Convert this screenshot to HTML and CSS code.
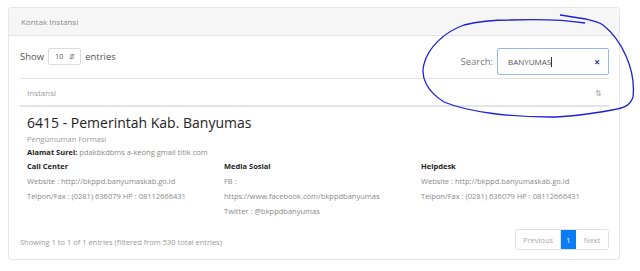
FILE: index.html
```html
<!DOCTYPE html>
<html lang="en">
<head>
  <meta charset="UTF-8">
  <title>Kontak Instansi</title>
  <link rel="stylesheet" href="styles.css">
</head>
<body>
  <div class="card">
    <div class="cardHeader">Kontak Instansi</div>
    <div class="cardBody">
      <div class="toolbar">
        <label class="lengthBox">Show
          <span class="selectBox">10 <span class="caret">&#8693;</span></span>
          entries</label>
        <label class="searchBox">Search:
          <span class="searchInput">BANYUMAS<span class="cursor"></span><span class="clear">&times;</span></span>
        </label>
      </div>

      <div class="tableHead">
        <span>Instansi</span>
        <span class="sortIcon">&#8645;</span>
      </div>

      <div class="row">
        <div class="title">6415 - Pemerintah Kab. Banyumas</div>
        <div class="sub">Pengumuman Formasi</div>
        <div class="line"><b>Alamat Surel:</b> pdakbkdbms a-keong gmail titik com</div>
        <div class="cols">
          <div class="col">
            <b>Call Center</b>
            <div>Website : http://bkppd.banyumaskab.go.id</div>
            <div>Telpon/Fax : (0281) 636079 HP : 08112666431</div>
          </div>
          <div class="col">
            <b>Media Sosial</b>
            <div>FB :</div>
            <div>https://www.facebook.com/bkppdbanyumas</div>
            <div>Twitter : @bkppdbanyumas</div>
          </div>
          <div class="col">
            <b>Helpdesk</b>
            <div>Website : http://bkppd.banyumaskab.go.id</div>
            <div>Telpon/Fax : (0281) 636079 HP : 08112666431</div>
          </div>
        </div>
      </div>

      <div class="footerBar">
        <div class="info">Showing 1 to 1 of 1 entries (filtered from 530 total entries)</div>
        <div class="pager">
          <span class="pageItem prev">Previous</span>
          <span class="pageItem active">1</span>
          <span class="pageItem next">Next</span>
        </div>
      </div>
    </div>
  </div>

  <!-- hand drawn marker around the search box -->
  <svg class="scribble" width="640" height="271" viewBox="0 0 640 271">
    <path d="M560 15 C580 18 596 20 603 25 C622 40 636 70 633 97 C630 106 624 108 612 110 C590 114 570 117 550 117 C510 117 468 112 444 102 C428 92 420 78 424 64 C428 48 444 32 464 25 C480 21 496 20 510 20 C540 19 566 20 585 23"
      fill="none" stroke="#1f1fd6" stroke-width="1.3"/>
  </svg>
</body>
</html>
```

FILE: styles.css
```css
* { box-sizing: border-box; margin: 0; padding: 0; }
html, body {
  width: 100%;
  height: 100%;
  background: #fff;
  font-family: "Open Sans", sans-serif;
  color: #858796;
  overflow: hidden;
}
body { padding: 7px 20px 0 8px; position: relative; }

.card {
  width: 612px;
  height: 253px;
  border: 1px solid #e6e6e6;
  border-radius: 3px;
  display: flex;
  flex-direction: column;
}

.cardHeader {
  height: 28px;
  background: #f6f6f6;
  border-bottom: 1px solid #e3e3e3;
  font-size: 8px;
  color: #8a8a8a;
  padding: 0 12px;
  display: flex;
  align-items: center;
}

.cardBody {
  padding: 11px 10px 0 11px;
  flex: 1;
  display: flex;
  flex-direction: column;
}

.toolbar {
  display: flex;
  justify-content: space-between;
  align-items: flex-start;
  height: 31px;
  font-size: 9.5px;
  color: #555;
}

.lengthBox { display: flex; align-items: center; gap: 4px; margin-top: 1px; }
.selectBox {
  width: 33px;
  height: 17px;
  border: 1px solid #dcdcdc;
  border-radius: 2px;
  font-size: 7px;
  display: flex;
  align-items: center;
  justify-content: space-between;
  padding: 0 5px 0 6px;
  color: #555;
}
.caret { font-size: 7px; }

.searchBox { display: flex; align-items: center; gap: 4px; color: #777; margin-top: 1px; }
.searchInput {
  width: 112px;
  height: 27px;
  border: 1px solid #8fb8f5;
  border-radius: 2px;
  font-size: 8px;
  color: #555;
  display: flex;
  align-items: center;
  padding: 0 8px 0 10px;
}
.cursor { width: 1px; height: 10px; background: #333; }
.clear { margin-left: auto; color: #2b3d70; font-size: 10px; font-weight: 700; }

.tableHead {
  border-top: 1px solid #e4e4e4;
  border-bottom: 2px solid #e1e4e8;
  height: 29px;
  padding: 0 7px;
  display: flex;
  justify-content: space-between;
  align-items: center;
  font-size: 8px;
  color: #9a9a9a;
}
.sortIcon { font-size: 8px; color: #aaa; }

.row {
  padding: 7px 7px 0;
  height: 118px;
  font-size: 7.5px;
  color: #888;
}
.title { font-size: 14px; color: #222; line-height: 18px; }
.sub { line-height: 14px; color: #999; }
.line { line-height: 13px; }
.row b { color: #222; font-weight: 700; }
.cols { display: flex; }
.col { width: 197px; flex-shrink: 0; line-height: 15px; }
.col b { display: block; }

.footerBar {
  display: flex;
  justify-content: space-between;
  align-items: center;
}
.info { font-size: 7.5px; color: #999; margin-top: 8px; }
.pager {
  display: flex;
  border: 1px solid #e2e2e2;
  border-radius: 3px;
  height: 21px;
  margin-top: 4px;
  font-size: 7.5px;
}
.pageItem {
  display: flex;
  align-items: center;
  justify-content: center;
  color: #aaa;
}
.prev { width: 45px; border-right: 1px solid #e2e2e2; }
.next { width: 32px; }
.pageItem.active { background: #0a7cf5; color: #fff; width: 15px; }

.scribble { position: absolute; top: 0; left: 0; pointer-events: none; }
```
